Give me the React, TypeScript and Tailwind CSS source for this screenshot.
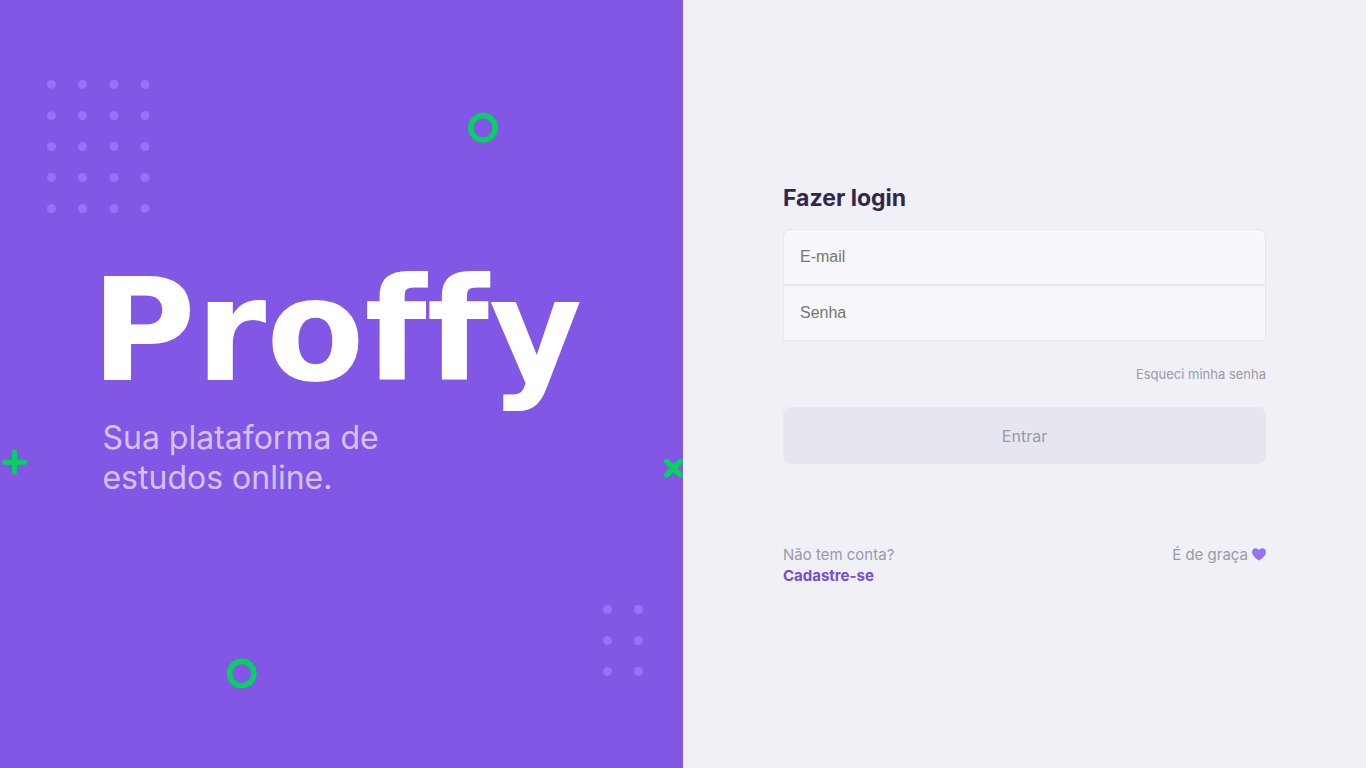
import React from 'react';

const dotGroups = [
  { xs: [51.5, 82.5, 114, 145], ys: [84.5, 115.5, 146.5, 177.5, 208.5] },
  { xs: [607.5, 638.5], ys: [609.5, 640.5, 671.5] },
];

function BackgroundShapes() {
  return (
    <svg
      aria-hidden="true"
      className="absolute inset-0 size-full"
      viewBox="0 0 683 768"
      preserveAspectRatio="xMidYMid slice"
      fill="none"
    >
      <g fill="#9871F5">
        {dotGroups.flatMap(({ xs, ys }) =>
          ys.flatMap((y) => xs.map((x) => <circle key={`${x}-${y}`} cx={x} cy={y} r="4.5" />)),
        )}
      </g>
      <g stroke="#04D361" strokeWidth="5.5">
        <circle cx="483" cy="127.7" r="12.2" />
        <circle cx="241.7" cy="673.5" r="12.2" />
      </g>
      <g stroke="#04D361" strokeWidth="5" strokeLinecap="round">
        <path d="M4.5 462.3H25M14.5 452V472" />
        <path strokeWidth="5.5" d="M666.8 461.5L680.2 474.9M680.2 461.5L666.8 474.9" />
      </g>
    </svg>
  );
}

function Logo() {
  return (
    <svg viewBox="0 0 478 140" className="w-full overflow-visible" fill="#FFFFFF">
      <text
        x="-11"
        y="110"
        fontSize="143"
        fontWeight="700"
        className="font-['DejaVu_Sans',sans-serif] [font-variant-ligatures:none]"
      >
        Proffy
      </text>
    </svg>
  );
}

function Hero() {
  return (
    <section className="relative flex flex-col justify-center overflow-hidden bg-[#8257E5] px-[15%] py-12">
      <BackgroundShapes />
      <div className="relative">
        <h1>
          <Logo />
        </h1>
        <p className="mt-2 max-w-80 text-[32px] leading-10 text-[#D4C2FF]">
          Sua plataforma de estudos online.
        </p>
      </div>
    </section>
  );
}

function LoginForm() {
  const inputStyle =
    "h-14 w-full border border-[#E6E6F0] bg-[#F8F8FC] px-4 font-['Liberation_Sans',sans-serif] text-base text-[#32264D] placeholder:text-[#757575] focus:outline-[#8257E5]";

  return (
    <main className="flex flex-col justify-center px-25 pt-12 pb-[50px] text-[#9C98A6]">
      <form onSubmit={(event) => event.preventDefault()}>
        <h2 className="mb-3 text-[23px] leading-[37px] font-bold text-[#32264D]">Fazer login</h2>
        <div className="flex flex-col">
          <input type="email" aria-label="E-mail" placeholder="E-mail" className={`${inputStyle} rounded-t-lg`} />
          <input type="password" aria-label="Senha" placeholder="Senha" className={inputStyle} />
        </div>
        <div className="mt-6 flex justify-end text-[13px] leading-[18px]">
          <a href="#recuperar">Esqueci minha senha</a>
        </div>
        <button type="submit" disabled className="mt-6 h-[57px] w-full rounded-lg bg-[#E6E6F0] text-base">
          Entrar
        </button>
      </form>
      <footer className="mt-20 flex justify-between text-[15px] leading-[21px]">
        <p>
          Não tem conta?
          <br />
          <a href="#cadastro" className="font-bold text-[#774DD6]">
            Cadastre-se
          </a>
        </p>
        <p className="flex h-[21px] items-center gap-1">
          É de graça
          <svg aria-hidden="true" viewBox="0 0 14 13" className="h-[13px] w-[14px]" fill="#9871F5">
            <path d="M7 12.6C5.8 11.8 0 8.2 0 4C0 1.7 1.6.2 3.6.2C5.1.2 6.3 1 7 2.3C7.7 1 8.9.2 10.4.2C12.4.2 14 1.7 14 4C14 8.2 8.2 11.8 7 12.6Z" />
          </svg>
        </p>
      </footer>
    </main>
  );
}

export default function App() {
  return (
    <div className="grid min-h-screen grid-cols-2 bg-[#F0F0F7] font-[Inter,sans-serif]">
      <Hero />
      <LoginForm />
    </div>
  );
}
